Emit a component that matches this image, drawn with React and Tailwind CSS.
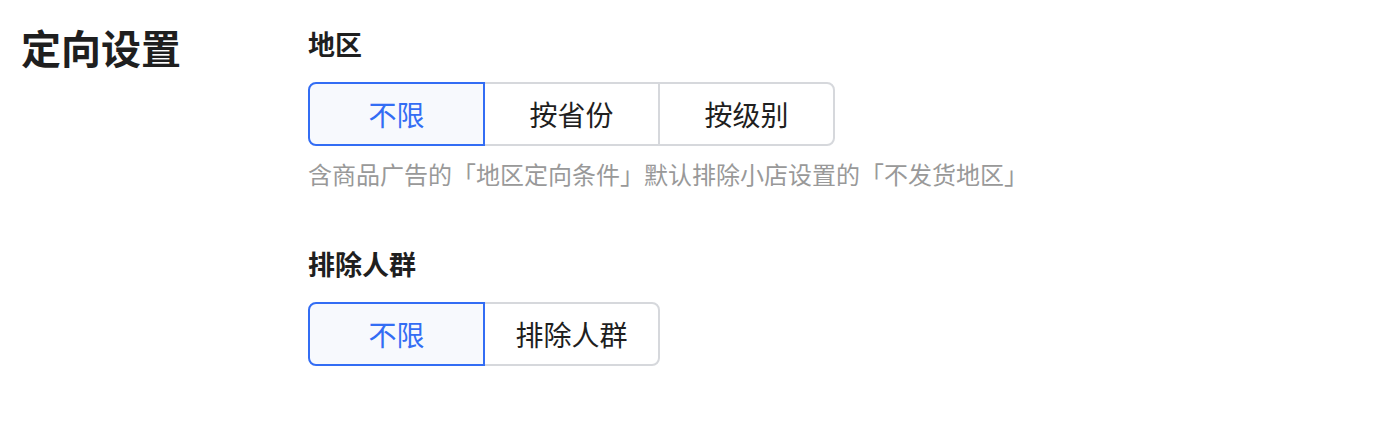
import { useState } from "react";

const FONT = { fontFamily: '"Noto Sans CJK SC", "Noto Sans", sans-serif' };

function Segmented({ options, value, onChange }) {
  return (
    <div className="flex">
      {options.map((opt, i) => {
        const active = opt === value;
        return (
          <button
            key={opt}
            onClick={() => onChange(opt)}
            className={
              "relative flex h-[64px] w-[177px] items-center justify-center border-2 text-[28px] " +
              (i > 0 ? "-ml-[2px] " : "") +
              (i === 0 ? "rounded-l-[8px] " : "") +
              (i === options.length - 1 ? "rounded-r-[8px] " : "") +
              (active
                ? "z-10 border-[#336df4] bg-[#f7f9fd] text-[#336df4]"
                : "border-[#d6d8dc] bg-white text-[#1f1f1f]")
            }
          >
            {opt}
          </button>
        );
      })}
    </div>
  );
}

export default function App() {
  const [region, setRegion] = useState("不限");
  const [exclude, setExclude] = useState("不限");

  return (
    <div className="flex min-h-[434px] bg-white pl-[21px] pt-[26px]" style={FONT}>
      <div className="-mt-[4px] w-[287px] text-[40px] font-semibold leading-[50px] text-[#1f1f1f]">定向设置</div>
      <div className="flex flex-col">
        <div className="text-[27px] font-semibold leading-[36px] text-[#1f1f1f]">地区</div>
        <div className="mt-[20px]">
          <Segmented options={["不限", "按省份", "按级别"]} value={region} onChange={setRegion} />
        </div>
        <div className="mt-[10px] text-[24px] leading-[36px] text-[#999999]">
          含商品广告的「地区定向条件」默认排除小店设置的「不发货地区」
        </div>
        <div className="mt-[54px] text-[27px] font-semibold leading-[36px] text-[#1f1f1f]">排除人群</div>
        <div className="mt-[20px]">
          <Segmented options={["不限", "排除人群"]} value={exclude} onChange={setExclude} />
        </div>
      </div>
    </div>
  );
}
